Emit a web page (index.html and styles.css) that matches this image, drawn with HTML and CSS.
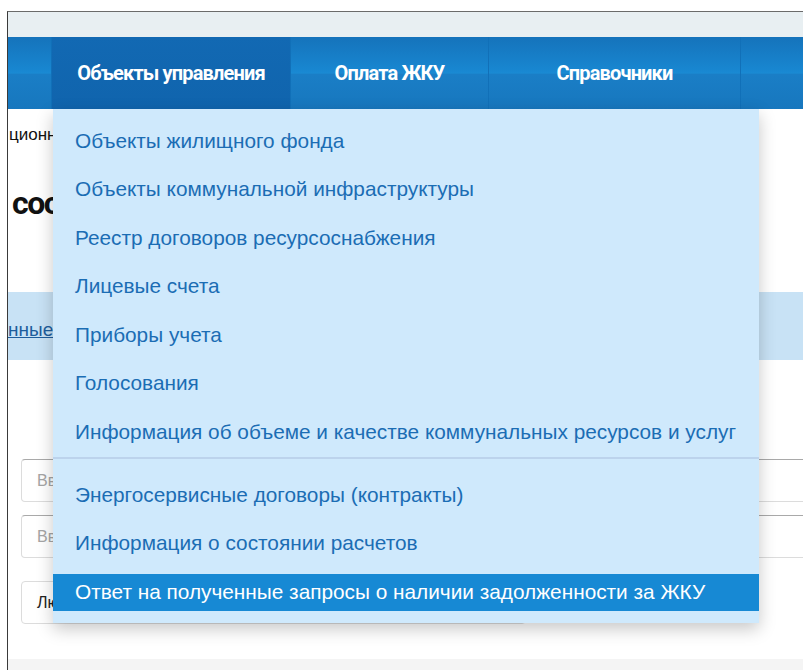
FILE: index.html
```html
<!DOCTYPE html>
<html lang="ru">
<head>
<meta charset="utf-8">
<title>Объекты управления</title>
<link rel="stylesheet" href="styles.css">
</head>
<body>
<div class="window">
  <div class="topbar"></div>
  <nav class="nav">
    <div class="nav-item nav-stub"></div>
    <div class="nav-item active">
      <span class="nav-label">Объекты управления</span>
      <div class="dropdown">
        <ul class="dd-group dd-first">
          <li><a href="#">Объекты жилищного фонда</a></li>
          <li><a href="#">Объекты коммунальной инфраструктуры</a></li>
          <li><a href="#">Реестр договоров ресурсоснабжения</a></li>
          <li><a href="#">Лицевые счета</a></li>
          <li><a href="#">Приборы учета</a></li>
          <li><a href="#">Голосования</a></li>
          <li><a href="#">Информация об объеме и качестве коммунальных ресурсов и услуг</a></li>
        </ul>
        <div class="dd-divider"></div>
        <ul class="dd-group dd-last">
          <li><a href="#">Энергосервисные договоры (контракты)</a></li>
          <li><a href="#">Информация о состоянии расчетов</a></li>
          <li><a href="#" class="current">Ответ на полученные запросы о наличии задолженности за ЖКУ</a></li>
        </ul>
      </div>
    </div>
    <div class="nav-item"><span class="nav-label">Оплата ЖКУ</span></div>
    <div class="nav-item"><span class="nav-label">Справочники</span></div>
    <div class="nav-item nav-tail"></div>
  </nav>
  <main class="content">
    <div class="crumbs">ционная система</div>
    <h1 class="title">состояние расчетов</h1>
    <div class="band"><a href="#" class="band-link">нные запросы</a></div>
    <form class="form">
      <input class="field" type="text" placeholder="Введите номер запроса">
      <input class="field" type="text" placeholder="Введите адрес дома">
      <div class="select">Любой</div>
    </form>
  </main>
  <div class="footer"></div>
</div>
</body>
</html>
```

FILE: styles.css
```css
html, body {
  margin: 0;
  padding: 0;
  background: #ffffff;
  overflow: hidden;
}

.window {
  margin: 11px 0 0 7px;
  height: 659px;
  border-top: 1px solid #6b6b6b;
  border-left: 1px solid #3a3a3a;
  overflow: hidden;
  position: relative;
  font-family: "Liberation Sans", Arial, sans-serif;
}

.topbar {
  height: 25px;
  background: #e8eff2;
}

/* main menu */
.nav {
  height: 72px;
  display: flex;
  background: linear-gradient(#1573bb 0%, #1886d0 45%, #1a8ad3 50%, #1a7ec6 52%, #1777be 100%);
}

.nav-item {
  position: relative;
  flex: none;
  padding: 0 24px;
  line-height: 72px;
  border-right: 1px solid #1170b8;
}

.nav-label {
  color: #ffffff;
  font-family: "Roboto", sans-serif;
  font-weight: 700;
  font-size: 20px;
  letter-spacing: -0.85px;
  white-space: nowrap;
}

.nav-stub {
  width: 43px;
  padding: 0;
}

.nav-tail {
  width: 120px;
  border-right: 0;
}

.nav-item.active {
  width: 190px;
  background: linear-gradient(#1269b3, #1064ad);
  text-align: center;
}

.nav-item:nth-child(3) { width: 149px; text-align: center; }
.nav-item:nth-child(4) { width: 203px; text-align: center; }

/* dropdown menu */
.dropdown {
  position: absolute;
  left: 1px;
  top: 72px;
  width: 706px;
  background: #cfe9fc;
  box-shadow: 0 6px 16px rgba(0, 0, 0, 0.22);
  text-align: left;
  z-index: 10;
}

.dd-group {
  list-style: none;
  margin: 0;
  padding-left: 0;
  display: flex;
  flex-direction: column;
  gap: 11.5px;
}

.dd-first { padding: 13.5px 0 6.5px; }
.dd-last { padding: 17.5px 0 12px; }

.dd-divider {
  height: 2px;
  background: #bcd3ec;
}

.dd-group a {
  display: block;
  height: 37px;
  line-height: 35px;
  padding-left: 22px;
  font-family: "Liberation Sans", Arial, sans-serif;
  font-weight: 400;
  font-size: 20.8px;
  color: #1b6db4;
  text-decoration: none;
  white-space: nowrap;
}

.dd-group a.current {
  background: #1789d4;
  color: #ffffff;
}

/* page content under the menu */
.content {
  padding-left: 1px;
}

.crumbs {
  margin-top: 16px;
  height: 20px;
  line-height: 20px;
  font-size: 17px;
  color: #111;
  white-space: nowrap;
}

.title {
  margin: 39px 0 0 3px;
  height: 38px;
  line-height: 38px;
  font-family: "Roboto", sans-serif;
  font-weight: 700;
  font-size: 32px;
  letter-spacing: -1.5px;
  color: #111;
  white-space: nowrap;
}

.band {
  margin: 70px 0 0 -1px;
  height: 68px;
  background: #c8e2f5;
  display: flex;
  align-items: center;
  padding-top: 8px;
  box-sizing: border-box;
}

.band-link {
  font-size: 19px;
  color: #1e5d9c;
  text-decoration: underline;
  white-space: nowrap;
}

.form {
  margin: 99px 0 0 12px;
  display: flex;
  flex-direction: column;
  gap: 13px;
}

.field, .select {
  box-sizing: border-box;
  height: 43px;
  border: 1px solid #dcdcdc;
  border-top-color: #a9a9a9;
  border-radius: 4px;
  padding: 0 15px;
  font-family: "Liberation Sans", Arial, sans-serif;
  font-size: 16px;
  background: #fff;
}

.field {
  width: 900px;
  color: #333;
}

.field::placeholder { color: #a5a5a5; }

.select {
  margin-top: 10px;
  width: 505px;
  line-height: 41px;
  color: #222;
  border-top-color: #dcdcdc;
}

.footer {
  position: absolute;
  left: 0;
  right: 0;
  bottom: 0;
  height: 12px;
  background: #f4f4f4;
}
```
